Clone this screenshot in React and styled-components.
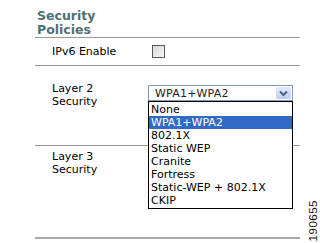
import React, {useState} from 'react'
import styled, {createGlobalStyle} from 'styled-components'

const GlobalStyle = createGlobalStyle`
    body {
        margin: 0;
        background: #ffffff;
        font-family: "DejaVu Sans", Verdana, sans-serif;
        color: #000000;
    }
`

const options = ['None', 'WPA1+WPA2', '802.1X', 'Static WEP', 'Cranite', 'Fortress', 'Static-WEP + 802.1X', 'CKIP']

const Chevron = () => (
    <svg width="9" height="7" viewBox="0 0 9 7">
        <path d="M1 1.5 L4.5 5 L8 1.5" fill="none" stroke="#4d6185" strokeWidth="2" />
    </svg>
)

const App = () => {

    const [security] = useState('WPA1+WPA2')

    return(
        <Page>
            <GlobalStyle />
            <Panel>
                <Heading>Security<br/>Policies</Heading>
                <Row $height={28} $center>
                    <Label>IPv6 Enable</Label>
                    <Checkbox />
                </Row>
                <Row $height={80} $top={16}>
                    <Label>Layer 2<br/>Security</Label>
                    <SelectWrap>
                        <SelectBox>
                            <SelectText>{security}</SelectText>
                            <DropButton><Chevron /></DropButton>
                        </SelectBox>
                        <OptionList>
                            {options.map(o => (
                                <Option key={o} $active={o === security}>{o}</Option>
                            ))}
                        </OptionList>
                    </SelectWrap>
                </Row>
                <Row $height={93} $top={4} $last>
                    <Label>Layer 3<br/>Security</Label>
                </Row>
            </Panel>
            <Side>
                <FigNumber>190655</FigNumber>
            </Side>
        </Page>
    )
}

export default App


const Page = styled.div`
    display: flex;
    flex-direction: row;
    width: 320px;
    height: 243px;
`

const Panel = styled.div`
    margin-left: 35px;
    width: 265px;
    display: flex;
    flex-direction: column;
`

const Heading = styled.div`
    padding: 9px 0 0 2px;
    font-size: 12.5px;
    font-weight: 700;
    line-height: 14px;
    color: #4f6f75;
    height: 28px;
    border-bottom: 1px solid #999999;
`

const Row = styled.div`
    display: grid;
    grid-template-columns: 113px 1fr;
    align-items: ${p => p.$center ? 'center' : 'start'};
    height: ${p => p.$height}px;
    padding-top: ${p => p.$center ? 0 : p.$top}px;
    box-sizing: border-box;
    border-bottom: ${p => p.$last ? '2px solid #a8a8a8' : '1px solid #999999'};
`

const Label = styled.div`
    padding-left: 17px;
    font-size: 11px;
    line-height: 13px;
`

const Checkbox = styled.div`
    width: 11px;
    height: 11px;
    margin-left: 4px;
    border: 1px solid #5a5a5a;
    background: linear-gradient(135deg, #d8d8d3, #f7f7f4);
`

const SelectWrap = styled.div`
    position: relative;
    margin-top: 3px;
    width: 145px;
`

const SelectBox = styled.div`
    display: flex;
    flex-direction: row;
    align-items: center;
    justify-content: space-between;
    height: 16px;
    box-sizing: border-box;
    border: 1px solid #7f9db9;
    padding: 0 1px 0 6px;
    background: #ffffff;
`

const SelectText = styled.span`
    font-size: 11px;
    letter-spacing: 0.2px;
    color: #222222;
`

const DropButton = styled.div`
    width: 15px;
    height: 12px;
    display: flex;
    align-items: center;
    justify-content: center;
    border-radius: 2px;
    background: linear-gradient(#e3ebfd, #b9cdf6);
`

const OptionList = styled.div`
    position: absolute;
    top: 16px;
    left: 0;
    width: 145px;
    box-sizing: border-box;
    border: 1px solid #000000;
    background: #ffffff;
    padding: 1px 0;
`

const Option = styled.div`
    height: 13px;
    line-height: 13px;
    padding-left: 2px;
    font-size: 11px;
    white-space: nowrap;
    background: ${p => p.$active ? '#316ac5' : 'transparent'};
    color: ${p => p.$active ? '#ffffff' : '#000000'};
`

const Side = styled.div`
    flex: 1;
    display: flex;
    align-items: flex-end;
    padding: 0 0 2px 7px;
`

const FigNumber = styled.div`
    writing-mode: vertical-rl;
    transform: rotate(180deg);
    font-family: "Liberation Sans", Arial, sans-serif;
    font-size: 11.5px;
    letter-spacing: 0.5px;
    color: #111111;
`
